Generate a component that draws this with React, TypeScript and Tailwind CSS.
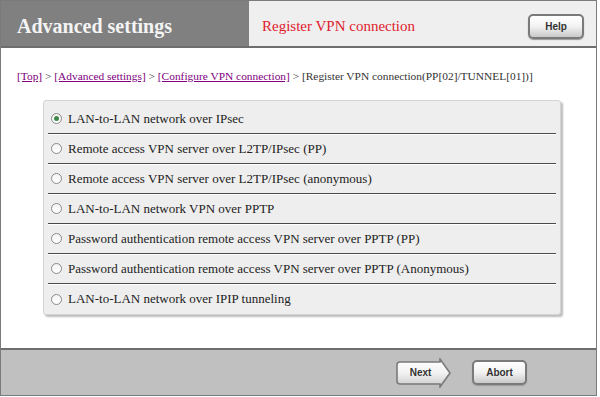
const OPTIONS = [
  'LAN-to-LAN network over IPsec',
  'Remote access VPN server over L2TP/IPsec (PP)',
  'Remote access VPN server over L2TP/IPsec (anonymous)',
  'LAN-to-LAN network VPN over PPTP',
  'Password authentication remote access VPN server over PPTP (PP)',
  'Password authentication remote access VPN server over PPTP (Anonymous)',
  'LAN-to-LAN network over IPIP tunneling',
];

function Radio({ checked }: { checked: boolean }) {
  return (
    <span className="flex h-[11px] w-[11px] shrink-0 items-center justify-center rounded-full border border-[#8a8a8a] bg-gradient-to-b from-[#f4f4f4] to-white">
      {checked && <span className="h-[5px] w-[5px] rounded-full bg-[#3c8a4a]" />}
    </span>
  );
}

function Crumb({ children }: { children: string }) {
  return <span className="text-[#800080] underline">{children}</span>;
}

export default function App() {
  return (
    <div className="h-[397px] w-[600px] bg-white font-['Liberation_Serif',serif]">
      <div className="flex h-[396px] w-[597px] flex-col border border-[#7a7a7a]">
        <header className="flex h-[47px] shrink-0 border-b-2 border-[#6e6e6e]">
          <div className="flex w-[248px] items-center bg-[#808080] pl-4 pt-[5px] text-[20px] font-bold text-[#f4f4f4]">
            Advanced settings
          </div>
          <div className="flex flex-1 items-center justify-between bg-[#efefef] pl-[13px] pr-[12px] pt-[5px]">
            <span className="text-[15px] text-[#e0202c]">Register VPN connection</span>
            <button
              type="button"
              className="h-[25px] w-[56px] rounded-[5px] border-2 border-[#7a7a7a] bg-gradient-to-b from-white via-[#f2f2f2] to-[#c9c9c9] font-['Liberation_Sans',sans-serif] text-[10px] font-bold text-[#333] shadow-[0_1px_1px_#999]"
            >
              Help
            </button>
          </div>
        </header>

        <main className="flex-1 bg-white">
          <nav className="pl-4 pt-[20px] text-[11.4px] text-[#333]">
            <Crumb>[Top]</Crumb> &gt; <Crumb>[Advanced settings]</Crumb> &gt;{' '}
            <Crumb>[Configure VPN connection]</Crumb> &gt; [Register VPN connection(PP[02]/TUNNEL[01])]
          </nav>

          <div className="ml-[42px] mt-[15px] w-[518px] rounded-[3px] border border-[#d4d4d4] bg-[#eeeeee] px-[4px] pt-[3px] shadow-[2px_2px_2px_#bcbcbc]">
            {OPTIONS.map((label, i) => (
              <div
                key={label}
                className={`flex h-[30px] items-center gap-[6px] pl-[3px] text-[13px] text-[#222] ${
                  i < OPTIONS.length - 1 ? 'border-b border-[#4a4a4a] shadow-[0_1px_0_#ffffff]' : ''
                }`}
              >
                <Radio checked={i === 0} />
                <span>{label}</span>
              </div>
            ))}
          </div>
        </main>

        <footer className="flex h-[47px] shrink-0 items-center justify-end gap-[20px] border-t-2 border-[#6e6e6e] bg-[#c0c0c0] pr-[69px]">
          <button type="button" className="relative h-[30px] w-[57px] font-['Liberation_Sans',sans-serif] text-[10px] font-bold text-[#333]">
            <svg className="absolute inset-0" width="57" height="30" viewBox="0 0 57 30">
              <defs>
                <linearGradient id="nextg" x1="0" y1="0" x2="0" y2="1">
                  <stop offset="0" stopColor="#ffffff" />
                  <stop offset="0.5" stopColor="#f2f2f2" />
                  <stop offset="1" stopColor="#c9c9c9" />
                </linearGradient>
              </defs>
              <path
                d="M5 4 H45 L45 1 L55 15 L45 29 L45 26 H5 Q2 26 2 23 V7 Q2 4 5 4 Z"
                fill="url(#nextg)"
                stroke="#7a7a7a"
                strokeWidth="1.6"
              />
            </svg>
            <span className="relative pr-[6px]">Next</span>
          </button>
          <button
            type="button"
            className="h-[25px] w-[55px] rounded-[5px] border-2 border-[#7a7a7a] bg-gradient-to-b from-white via-[#f2f2f2] to-[#c9c9c9] font-['Liberation_Sans',sans-serif] text-[10px] font-bold text-[#333] shadow-[0_1px_1px_#999]"
          >
            Abort
          </button>
        </footer>
      </div>
    </div>
  );
}
